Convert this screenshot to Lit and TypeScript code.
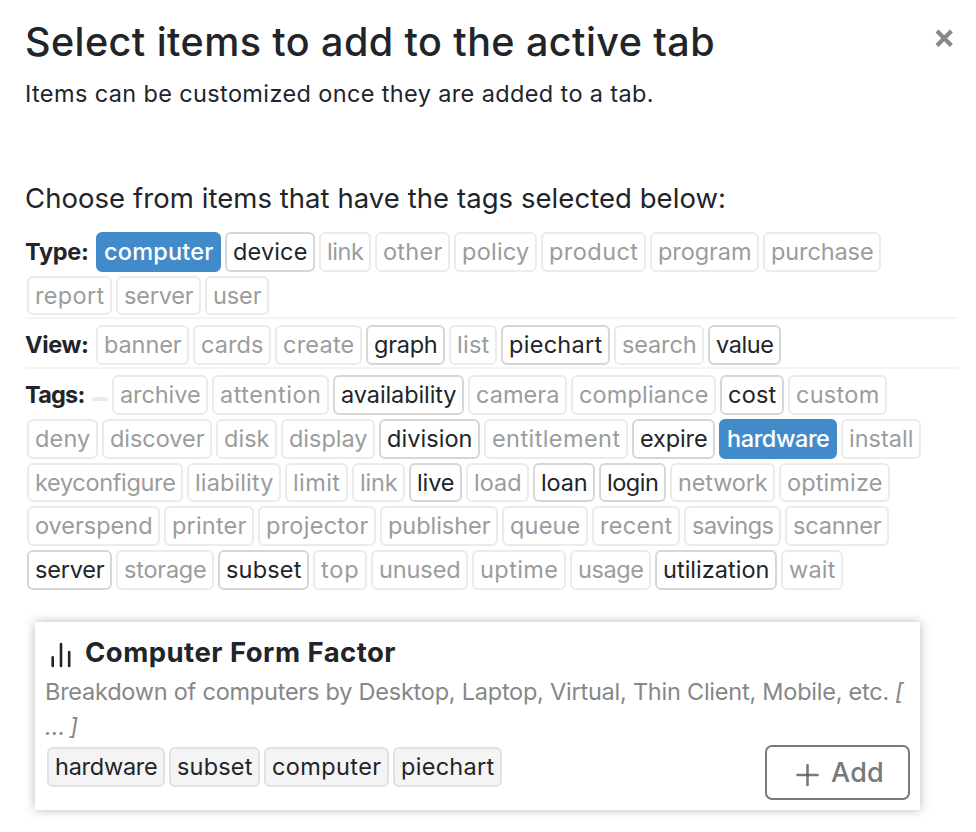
import { LitElement, html, css, svg } from "lit";
import { customElement, property, state } from "lit/decorators.js";
import { classMap } from "lit/directives/class-map.js";
import { styleMap } from "lit/directives/style-map.js";

type Tag = [label: string, width: number];

const TYPE_TAGS: Tag[] = [
  ["computer", 125], ["device", 90], ["link", 52], ["other", 75], ["policy", 83],
  ["product", 105], ["program", 109], ["purchase", 118],
  ["report", 85], ["server", 85], ["user", 64],
];

const VIEW_TAGS: Tag[] = [
  ["banner", 93], ["cards", 78], ["create", 87], ["graph", 79], ["list", 48],
  ["piechart", 109], ["search", 90], ["value", 73],
];

const TOPIC_TAGS: Tag[] = [
  ["", 16], ["archive", 96], ["attention", 117], ["availability", 131], ["camera", 99],
  ["compliance", 145], ["cost", 64], ["custom", 99],
  ["deny", 71], ["discover", 110], ["disk", 61], ["display", 94], ["division", 101],
  ["entitlement", 144], ["expire", 83], ["hardware", 118], ["install", 80],
  ["keyconfigure", 156], ["liability", 94], ["limit", 63], ["link", 53], ["live", 53],
  ["load", 63], ["loan", 62], ["login", 67], ["network", 105], ["optimize", 111],
  ["overspend", 133], ["printer", 90], ["projector", 118], ["publisher", 118],
  ["queue", 86], ["recent", 88], ["savings", 97], ["scanner", 104],
  ["server", 85], ["storage", 98], ["subset", 91], ["top", 54], ["unused", 97],
  ["uptime", 94], ["usage", 81], ["utilization", 122], ["wait", 62],
];

const CARD_TAGS: Tag[] = [["hardware", 118], ["subset", 91], ["computer", 125], ["piechart", 109]];

/** One line of text, tracked so that it fills the given width. */
@customElement("fit-text")
class FitText extends LitElement {
  @property() text = "";
  @property({ type: Number }) width = 0;
  @state() private tracking = 0;

  static styles = css`
    :host { display: block; white-space: pre; }
    .line { display: inline-block; vertical-align: top; }
  `;

  async firstUpdated() {
    this.fit();
    await document.fonts.ready;
    this.fit();
  }

  private fit() {
    const line = this.renderRoot.querySelector(".line") as HTMLElement;
    const natural = line.getBoundingClientRect().width - this.tracking * this.text.length;
    this.tracking = (this.width - natural) / this.text.length;
  }

  render() {
    return html`<span class="line" style=${styleMap({ letterSpacing: `${this.tracking}px` })}>${this.text}</span>`;
  }
}

@customElement("tag-chip")
class TagChip extends LitElement {
  @property() label = "";
  @property({ type: Number }) width = 0;
  @property() kind: "idle" | "available" | "selected" | "static" = "idle";

  static styles = css`
    :host { display: flex; align-items: center; height: 39.75px; }
    .chip {
      box-sizing: border-box;
      height: 100%;
      padding: 0 0 0 6px;
      border: 2px solid #ebebeb;
      border-radius: 6px;
      font-size: 23.5px;
      line-height: 35px;
      color: #9b9c9d;
      overflow: hidden;
    }
    .available { border-color: #d6d6d6; color: #212529; }
    .selected { border-color: #428bca; background: #428bca; color: #fff; font-weight: 500; }
    .static { border-color: #e1e1e1; background: #f4f4f4; color: #212529; }
    .empty { height: 4px; padding: 0; margin-top: 8px; border-radius: 2px; }
  `;

  render() {
    const classes = { chip: true, [this.kind]: true, empty: !this.label };
    return html`<div class=${classMap(classes)} style=${styleMap({ width: `${this.width}px` })}>
      ${this.label ? html`<fit-text .text=${this.label} .width=${this.width - 15.5}></fit-text>` : ""}
    </div>`;
  }
}

@customElement("tag-group")
class TagGroup extends LitElement {
  @property() name = "";
  @property({ type: Number }) nameWidth = 0;
  @property({ type: Array }) tags: Tag[] = [];
  @property({ type: Array }) available: string[] = [];
  @property() selected = "";

  static styles = css`
    :host { display: block; }
    .row { display: flex; flex-wrap: wrap; gap: 4px; padding-left: 2px; }
    .name { margin-left: -2px; font-size: 23.5px; font-weight: 700; line-height: 39px; }
  `;

  private kindOf(label: string) {
    if (label === this.selected) return "selected";
    return this.available.includes(label) ? "available" : "idle";
  }

  render() {
    return html`<div class="row">
      <div class="name" style=${styleMap({ width: `${this.nameWidth}px` })}>
        <fit-text .text=${this.name} .width=${this.nameWidth - 3.5}></fit-text>
      </div>
      ${this.tags.map(([label, width]) => html`<tag-chip .label=${label} .width=${width} .kind=${this.kindOf(label)}></tag-chip>`)}
    </div>`;
  }
}

const closeIcon = svg`<path d="M2 2L16.4 16.4M16.4 2L2 16.4" stroke="#888" stroke-width="4.2" />`;
const barsIcon = svg`<path d="M2.7 15.4V24M11 2V24M19.2 10V24" stroke="#212529" stroke-width="2.6" stroke-linecap="round" />`;
const plusIcon = svg`<g stroke="#55585a" stroke-opacity=".8" stroke-width="2.6" stroke-linecap="round">
  <path d="M1.5 11H21.5" /><path d="M11.5 1.3V21" /></g>`;

@customElement("app-root")
class AppRoot extends LitElement {
  static styles = css`
    :host {
      display: block;
      box-sizing: border-box;
      height: 832px;
      padding: 16px 19px 0 25px;
      background: #fff;
      color: #212529;
      font-family: Inter, "Liberation Sans", sans-serif;
      overflow: hidden;
    }
    svg { display: block; fill: none; overflow: visible; }
    .header { display: flex; justify-content: space-between; height: 50px; }
    .title { margin: 0; font-size: 39.5px; font-weight: 500; line-height: 52px; }
    .close { width: 18.4px; height: 18.4px; margin: 12.6px 3.8px 0 0; padding: 0; border: 0; background: none; }
    .subtitle { margin: 10px 0 0; font-size: 23.5px; line-height: 36px; }
    .prompt { margin: 66px 0 0; font-size: 27.5px; font-weight: 400; line-height: 40px; }
    .groups { margin-top: 13.9px; }
    .group { display: block; padding-bottom: 2px; margin-bottom: 6px; border-bottom: 2px solid #f4f4f4; }
    .group:last-child { border-bottom: 0; }
    .card {
      box-sizing: border-box;
      width: 885px;
      height: 188px;
      margin: 30.2px 0 0 10px;
      padding: 10px;
      background: #fff;
      box-shadow: 0 0 10px rgba(0, 0, 0, 0.28);
    }
    .card-head { display: flex; height: 40px; gap: 8px; padding-left: 5px; }
    .card-title { margin: 0; font-size: 27.5px; font-weight: 700; line-height: 40px; }
    .bars { margin-top: 10px; }
    .description { font-size: 23.5px; line-height: 35px; margin-top: 2px; color: #878787; }
    .description-line { display: flex; gap: 6px; }
    .card-foot { display: flex; justify-content: space-between; margin-top: 1px; }
    .card-tags { display: flex; gap: 4px; padding: 2px 0 0 2px; }
    .add {
      box-sizing: border-box;
      display: flex;
      width: 145px;
      height: 55px;
      padding: 0 0 0 28.5px;
      gap: 12.5px;
      border: 2px solid #77797b;
      border-radius: 7px;
      background: #fff;
      color: #77797b;
      font: 500 27px/51px Inter, "Liberation Sans", sans-serif;
    }
    .plus { margin-top: 17px; }
  `;

  render() {
    return html`
      <header class="header">
        <h1 class="title"><fit-text .text=${"Select items to add to the active tab"} .width=${690}></fit-text></h1>
        <button class="close" aria-label="Close"><svg width="18.4" height="18.4" viewBox="0 0 18.4 18.4">${closeIcon}</svg></button>
      </header>
      <p class="subtitle"><fit-text .text=${"Items can be customized once they are added to a tab."} .width=${629}></fit-text></p>
      <h2 class="prompt"><fit-text .text=${"Choose from items that have the tags selected below:"} .width=${701}></fit-text></h2>
      <section class="groups">
        <tag-group class="group" .name=${"Type:"} .nameWidth=${67} .tags=${TYPE_TAGS}
          .available=${["device"]} .selected=${"computer"}></tag-group>
        <tag-group class="group" .name=${"View:"} .nameWidth=${67} .tags=${VIEW_TAGS}
          .available=${["graph", "piechart", "value"]}></tag-group>
        <tag-group class="group" .name=${"Tags:"} .nameWidth=${63} .tags=${TOPIC_TAGS}
          .available=${["availability", "cost", "division", "expire", "live", "loan", "login", "server", "subset", "utilization"]}
          .selected=${"hardware"}></tag-group>
      </section>
      <article class="card">
        <div class="card-head">
          <svg class="bars" width="27" height="27" viewBox="0 0 27 27">${barsIcon}</svg>
          <h3 class="card-title"><fit-text .text=${"Computer Form Factor"} .width=${311}></fit-text></h3>
        </div>
        <div class="description">
          <div class="description-line">
            <fit-text .text=${"Breakdown of computers by Desktop, Laptop, Virtual, Thin Client, Mobile, etc."} .width=${844}></fit-text>
            <i>[</i>
          </div>
          <div class="description-line"><i><fit-text .text=${"… ]"} .width=${32}></fit-text></i></div>
        </div>
        <div class="card-foot">
          <div class="card-tags">
            ${CARD_TAGS.map(([label, width]) => html`<tag-chip .label=${label} .width=${width} .kind=${"static"}></tag-chip>`)}
          </div>
          <button class="add">
            <svg class="plus" width="23" height="23" viewBox="0 0 23 23">${plusIcon}</svg>
            <fit-text .text=${"Add"} .width=${53}></fit-text>
          </button>
        </div>
      </article>
    `;
  }
}
